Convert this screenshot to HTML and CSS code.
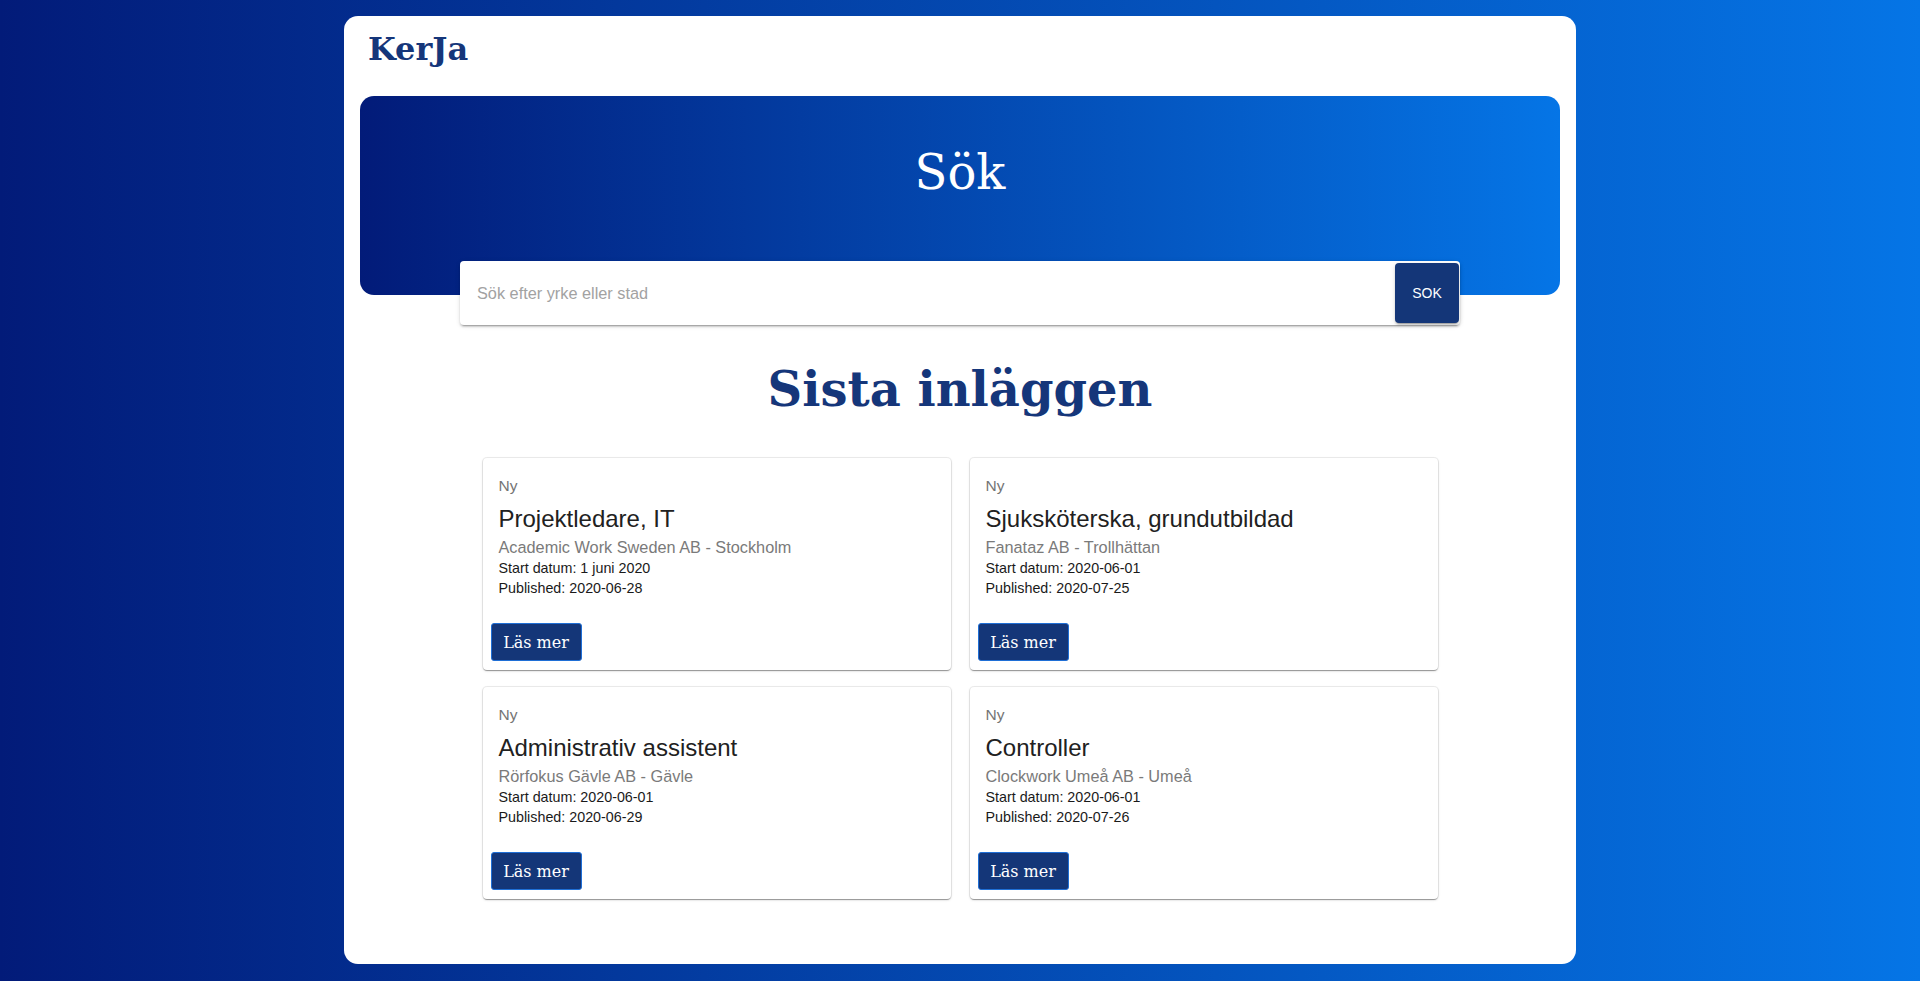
FILE: index.html
```html
<!DOCTYPE html>
<html lang="sv">
<head>
<meta charset="utf-8">
<title>KerJa</title>
<link rel="stylesheet" href="styles.css">
</head>
<body>
<div class="page">
  <header class="topbar">
    <h1 class="logo">KerJa</h1>
  </header>
  <section class="hero">
    <h2 class="hero-title">Sök</h2>
  </section>
  <form class="search" onsubmit="return false">
    <input class="search-input" type="text" placeholder="Sök efter yrke eller stad">
    <button class="search-btn" type="submit">SOK</button>
  </form>
  <h2 class="section-title">Sista inläggen</h2>
  <div class="cards">
    <div class="card">
      <div class="card-content">
        <div class="card-tag">Ny</div>
        <div class="card-title">Projektledare, IT</div>
        <div class="card-sub">Academic Work Sweden AB - Stockholm</div>
        <div class="card-line">Start datum: 1 juni 2020</div>
        <div class="card-line">Published: 2020-06-28</div>
      </div>
      <div class="card-actions"><button class="read-btn">Läs mer</button></div>
    </div>
    <div class="card">
      <div class="card-content">
        <div class="card-tag">Ny</div>
        <div class="card-title">Sjuksköterska, grundutbildad</div>
        <div class="card-sub">Fanataz AB - Trollhättan</div>
        <div class="card-line">Start datum: 2020-06-01</div>
        <div class="card-line">Published: 2020-07-25</div>
      </div>
      <div class="card-actions"><button class="read-btn">Läs mer</button></div>
    </div>
    <div class="card">
      <div class="card-content">
        <div class="card-tag">Ny</div>
        <div class="card-title">Administrativ assistent</div>
        <div class="card-sub">Rörfokus Gävle AB - Gävle</div>
        <div class="card-line">Start datum: 2020-06-01</div>
        <div class="card-line">Published: 2020-06-29</div>
      </div>
      <div class="card-actions"><button class="read-btn">Läs mer</button></div>
    </div>
    <div class="card">
      <div class="card-content">
        <div class="card-tag">Ny</div>
        <div class="card-title">Controller</div>
        <div class="card-sub">Clockwork Umeå AB - Umeå</div>
        <div class="card-line">Start datum: 2020-06-01</div>
        <div class="card-line">Published: 2020-07-26</div>
      </div>
      <div class="card-actions"><button class="read-btn">Läs mer</button></div>
    </div>
  </div>
</div>
</body>
</html>
```
FILE: styles.css
```css
html {
  min-height: 100%;
  background: linear-gradient(to right, #021b79, #0575e6);
}
body {
  margin: 0;
  min-height: 981px;
  font-family: "DejaVu Serif", serif;
}
.page {
  width: 1232px;
  margin: 16px auto 0;
  background: #fff;
  border-radius: 14px;
  padding: 0 16px 63px;
  box-sizing: border-box;
  height: 948px;
}
.topbar {
  padding: 15px 8px 0;
}
.logo {
  margin: 0;
  font-family: "DejaVu Serif", serif;
  font-weight: bold;
  font-size: 32px;
  line-height: 37px;
  color: #15367a;
}
.hero {
  margin-top: 28px;
  height: 199px;
  border-radius: 14px;
  background: linear-gradient(to right, #021b79, #0575e6);
  box-sizing: border-box;
  padding-top: 48px;
  text-align: center;
}
.hero-title {
  margin: 0;
  font-family: "DejaVu Serif", serif;
  font-weight: normal;
  font-size: 48px;
  line-height: 56px;
  color: #fff;
}
.search {
  width: 1000px;
  height: 64px;
  margin: -34px auto 0;
  background: #fff;
  border-radius: 4px;
  box-shadow: 0 3px 1px -2px rgba(0,0,0,.2), 0 2px 2px 0 rgba(0,0,0,.14), 0 1px 5px 0 rgba(0,0,0,.12);
  display: flex;
  align-items: center;
  padding: 2px 1px 2px 17px;
  box-sizing: border-box;
  position: relative;
}
.search-input {
  flex: 1;
  border: none;
  outline: none;
  font-family: "Liberation Sans", Arial, sans-serif;
  font-size: 16.3px;
  color: #333;
  padding: 0;
  height: 24px;
  background: transparent;
}
.search-input::placeholder {
  color: #a2a2a2;
}
.search-btn {
  width: 64px;
  height: 60px;
  border: none;
  border-radius: 4px;
  background: #143678;
  color: #fff;
  font-family: "Liberation Sans", Arial, sans-serif;
  font-size: 14px;
  box-shadow: 0 3px 1px -2px rgba(0,0,0,.2), 0 2px 2px 0 rgba(0,0,0,.14), 0 1px 5px 0 rgba(0,0,0,.12);
  padding: 0;
}
.section-title {
  margin: 36px 0 0;
  text-align: center;
  font-family: "DejaVu Serif", serif;
  font-weight: bold;
  font-size: 48px;
  line-height: 56px;
  color: #15367a;
}
.cards {
  display: grid;
  grid-template-columns: 468px 468px;
  column-gap: 19px;
  row-gap: 17px;
  justify-content: center;
  margin-top: 41px;
}
.card {
  background: #fff;
  border-radius: 4px;
  box-shadow: 0 0 0 1px rgba(0,0,0,.07), 0 2px 1px -1px rgba(0,0,0,.2), 0 1px 1px 0 rgba(0,0,0,.14), 0 1px 3px 0 rgba(0,0,0,.12);
  font-family: "Liberation Sans", Arial, sans-serif;
}
.card-content {
  padding: 16px 16px 17px;
}
.card-tag {
  font-size: 15.5px;
  line-height: 23px;
  color: #757575;
}
.card-title {
  margin-top: 6px;
  font-size: 24px;
  line-height: 32px;
  color: #212121;
}
.card-sub {
  margin-top: 1px;
  font-size: 16.3px;
  line-height: 22px;
  color: #7a7a7a;
}
.card-line {
  font-size: 14.3px;
  line-height: 20px;
  color: #1a1a1a;
}
.card-actions {
  padding: 8px 8px 9px;
  display: flex;
}
.read-btn {
  height: 38px;
  width: 91px;
  padding: 0;
  border: 1px solid #1f6fd6;
  border-radius: 3px;
  background: #143678;
  color: #fff;
  font-family: "DejaVu Serif", serif;
  font-size: 16px;
}
```
